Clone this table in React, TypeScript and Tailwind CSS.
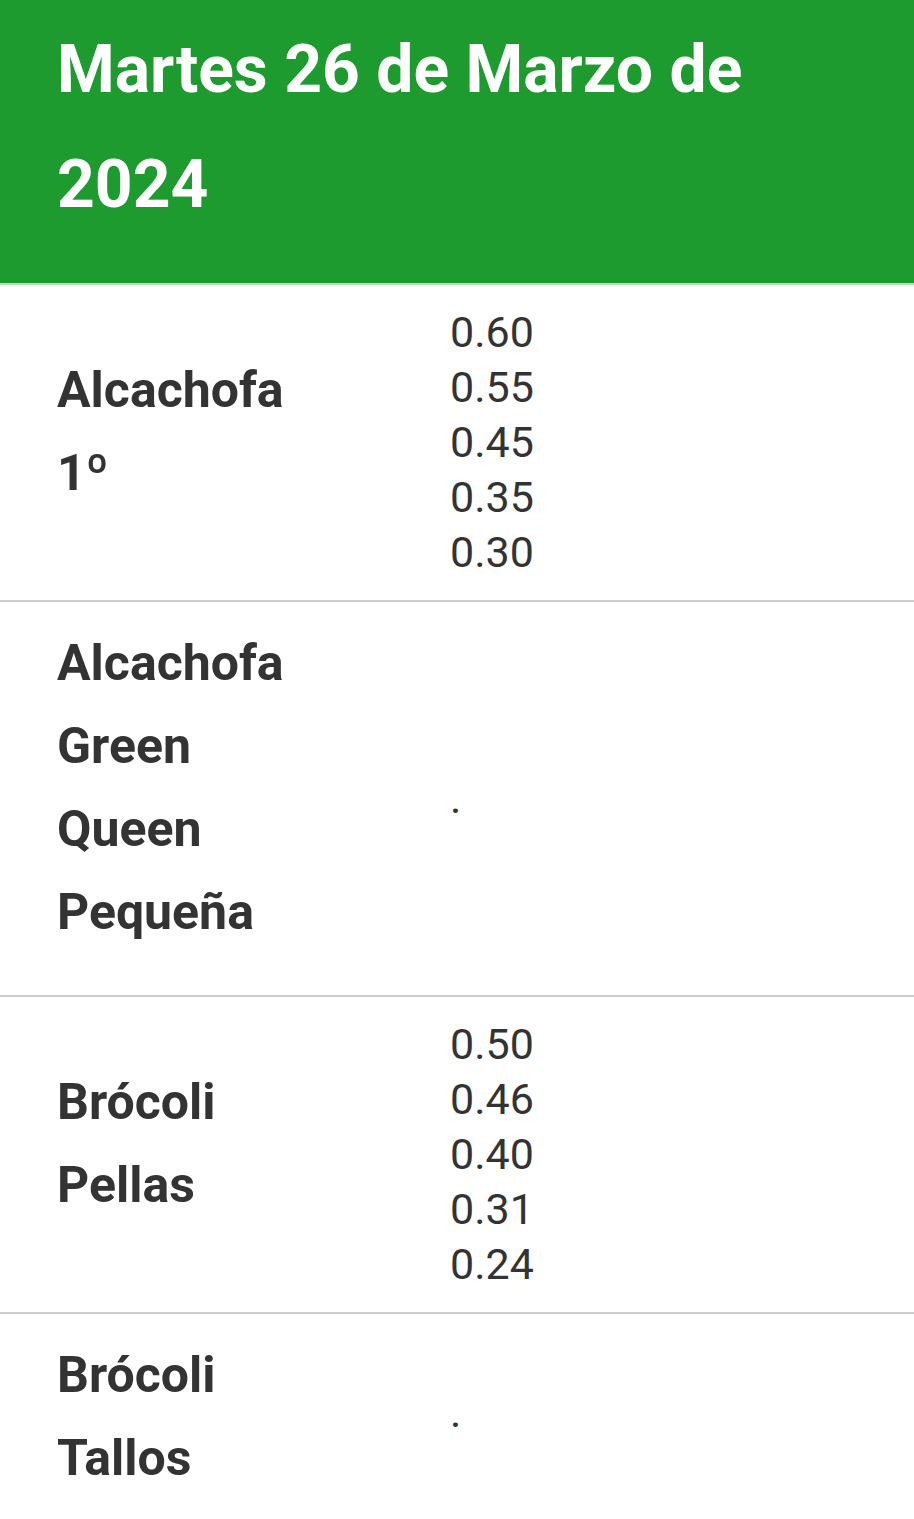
const rows: { name: string[]; prices: string[]; priceClass: string }[] = [
  { name: ['Alcachofa', '1º'], prices: ['0.60', '0.55', '0.45', '0.35', '0.30'], priceClass: 'py-[20px]' },
  { name: ['Alcachofa', 'Green', 'Queen', 'Pequeña'], prices: ['.'], priceClass: 'py-[20px]' },
  { name: ['Brócoli', 'Pellas'], prices: ['0.50', '0.46', '0.40', '0.31', '0.24'], priceClass: 'py-[20px]' },
  { name: ['Brócoli', 'Tallos'], prices: ['.'], priceClass: 'pt-[20px] pb-[50px]' },
]

export default function App() {
  return (
    <div className="min-h-screen bg-white font-['Roboto',sans-serif] text-[#333]">
      <header className="bg-[#1e9b2f] border-b-2 border-[#bcd9bf] px-[57px] pt-[12px] h-[285px]">
        <h1 className="text-white font-bold text-[66px] leading-[115px]">
          Martes 26 de Marzo de 2024
        </h1>
      </header>

      {rows.map((row, i) => (
        <div key={i} className="flex border-b-2 border-[#cccccc] pl-[57px]">
          <div className="w-[393px] pt-[20px] pb-[41px] self-center">
            {row.name.map((line) => (
              <div key={line} className="font-bold text-[50px] leading-[83px]">
                {line}
              </div>
            ))}
          </div>
          <div className={`self-center ${row.priceClass}`}>
            {row.prices.map((p, j) => (
              <div key={j} className="text-[43px] leading-[55px]">
                {p}
              </div>
            ))}
          </div>
        </div>
      ))}
    </div>
  )
}
